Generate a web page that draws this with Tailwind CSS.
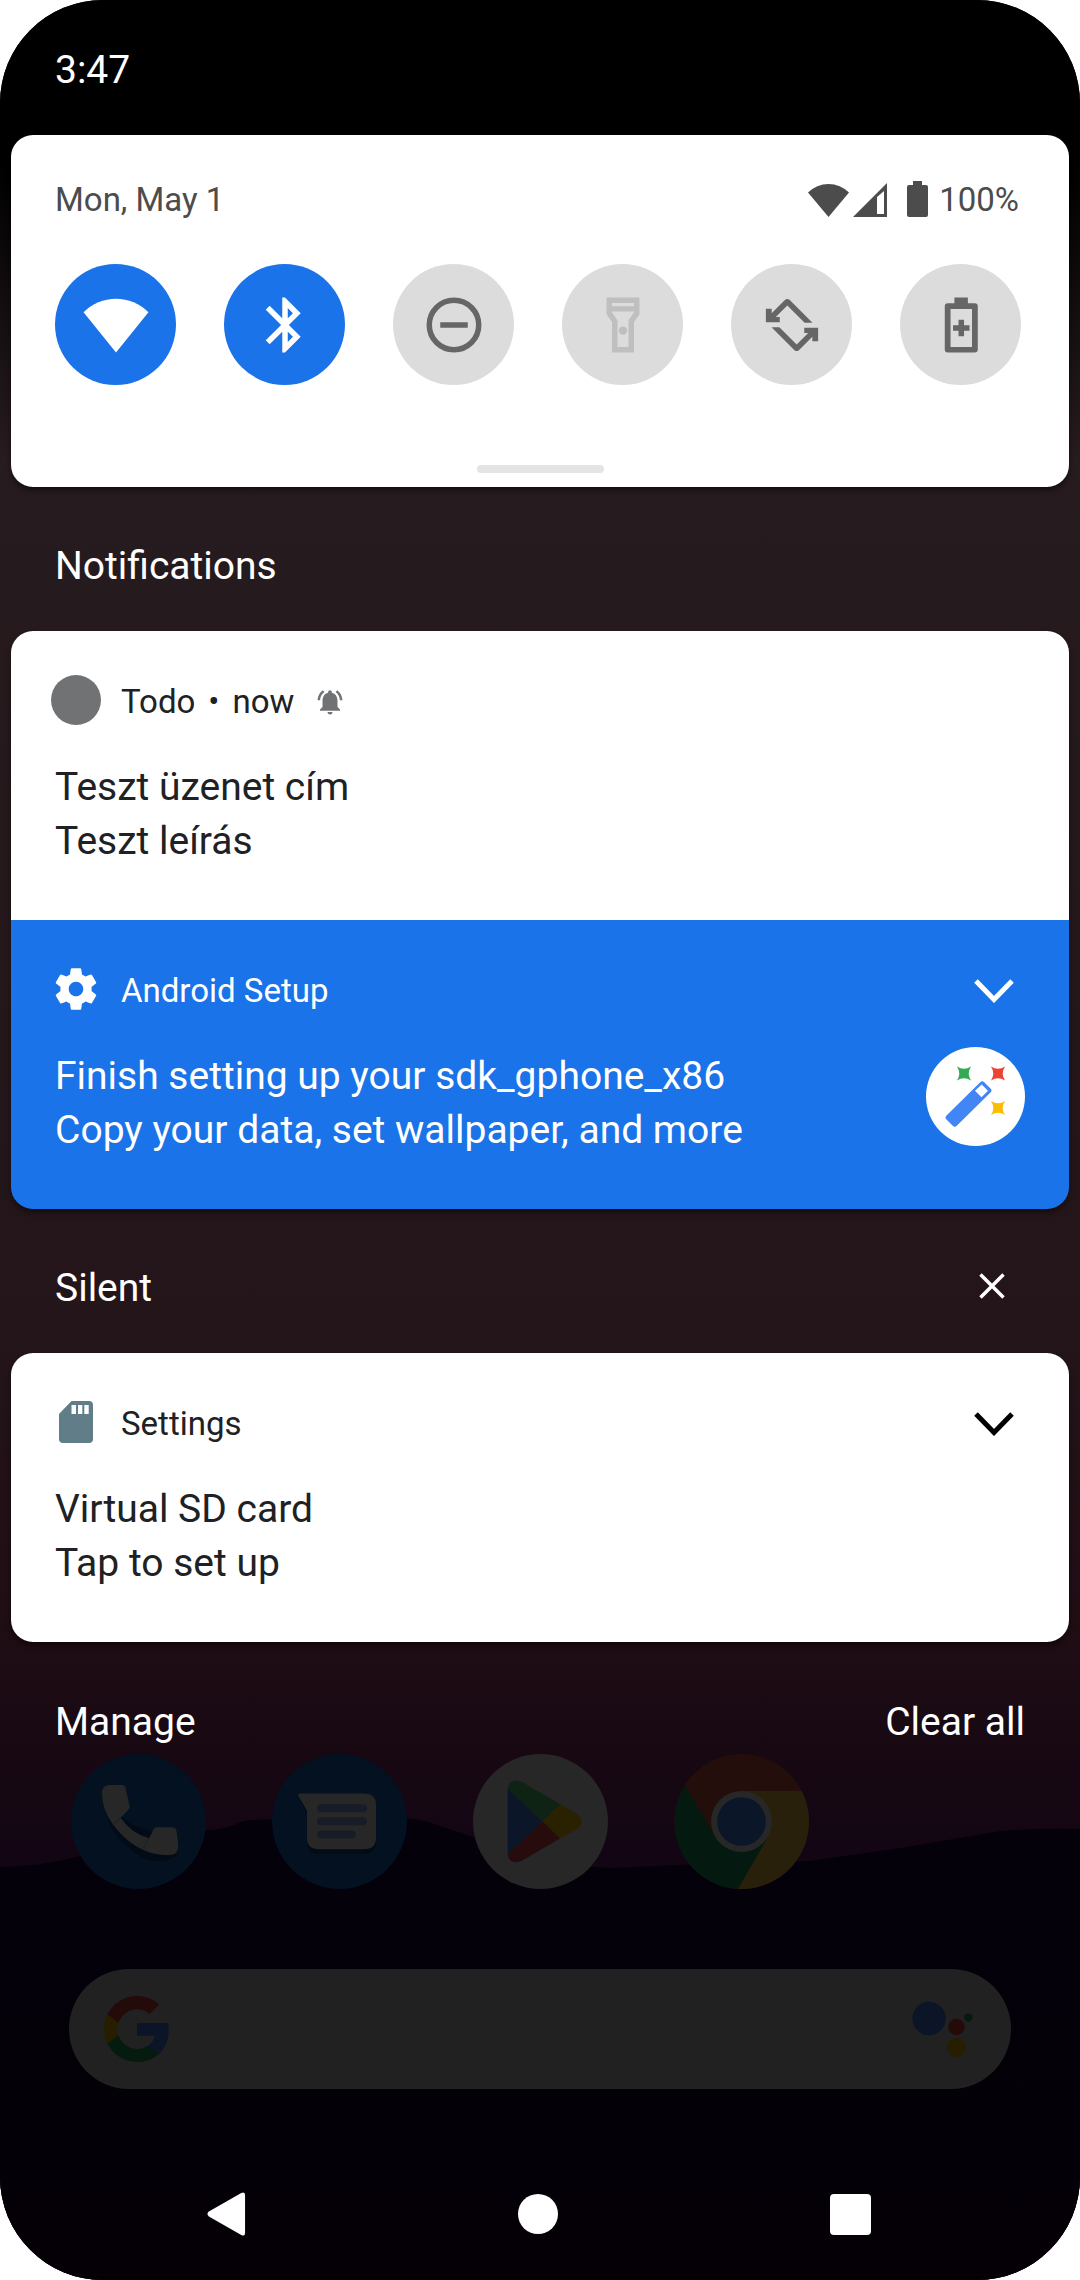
<!DOCTYPE html>
<html lang="en">
<head>
<meta charset="utf-8">
<meta name="viewport" content="width=device-width, initial-scale=1">
<title>Notification shade</title>
<script src="https://cdn.jsdelivr.net/npm/@tailwindcss/browser@4"></script>
</head>
<body class="bg-white font-['Roboto',sans-serif]">
<div class="relative isolate flex min-h-screen flex-col overflow-hidden rounded-[103px] bg-[#040007] text-[39px] leading-[54px] text-white">

  <!-- Wallpaper -->
  <svg class="absolute inset-0 -z-10 h-full w-full" viewBox="0 0 1080 2280" preserveAspectRatio="none" aria-hidden="true">
    <defs>
      <linearGradient id="sky" x1="0" y1="0" x2="0" y2="1">
        <stop offset="0" stop-color="#000"/>
        <stop offset=".07" stop-color="#000"/>
        <stop offset=".2" stop-color="#261b1e"/>
        <stop offset=".4" stop-color="#24181b"/>
        <stop offset=".58" stop-color="#23151a"/>
        <stop offset=".72" stop-color="#1f0d14"/>
        <stop offset=".77" stop-color="#170812"/>
        <stop offset=".82" stop-color="#120514"/>
      </linearGradient>
      <linearGradient id="hill" x1="0" y1="0" x2="0" y2="1">
        <stop offset="0" stop-color="#04010b"/>
        <stop offset="1" stop-color="#040006"/>
      </linearGradient>
    </defs>
    <rect width="1080" height="2280" fill="url(#sky)"/>
    <path fill="url(#hill)" d="M0 1867Q45 1866 80 1856L206 1830Q225 1830 240 1822Q260 1818 290 1820H380Q410 1814 440 1826L473 1837Q540 1866 610 1868L700 1864L809 1861L900 1848L1000 1831Q1040 1828 1080 1829V2280H0Z"/>
  </svg>

  <header class="px-[55px] pt-[43px] pb-[38px]"><time>3:47</time></header>

  <main class="px-[11px]">
    <!-- Quick settings -->
    <section class="rounded-[22px] bg-white pr-12 pl-11 text-[33px] leading-10 text-[#4c4c4c] shadow-md shadow-black/40" aria-label="Quick settings">
      <div class="flex items-center justify-between pt-[45px] pr-0.5">
        <time>Mon, May 1</time>
        <div class="flex items-center">
          <svg class="mr-1 h-[34px] w-[41px]" viewBox="0 0 41 34" fill="currentColor" aria-label="Wi-Fi"><path d="M20.500 34L0 9.500A29 29 0 0 1 41 9.500Z"/></svg>
          <svg class="mr-5 h-[34px] w-[34px]" viewBox="0 0 34 34" fill="currentColor" aria-label="Signal"><path fill-rule="evenodd" d="M34 0V34H0ZM24 14V31H31V8Z"/></svg>
          <svg class="mr-[11px] mb-0.5 h-9 w-[21px]" viewBox="0 0 21 36" fill="currentColor" aria-label="Battery"><path d="M6 0H15V4H19Q21 4 21 6V34Q21 36 19 36H2Q0 36 0 34V6Q0 4 2 4H6Z"/></svg>
          <span>100%</span>
        </div>
      </div>
      <div class="flex justify-between pt-11">
        <button class="grid size-[121px] place-items-center rounded-full bg-[#1a73e8] text-white" aria-label="Wi-Fi"><svg class="size-[66px]" viewBox="0 0 24 24" fill="currentColor"><path d="M12 22L.2 7.400A16.500 16.500 0 0 1 23.800 7.400Z"/></svg></button>
        <button class="grid size-[121px] place-items-center rounded-full bg-[#1a73e8] text-white" aria-label="Bluetooth"><svg class="size-[66px]" viewBox="0 0 24 24" fill="currentColor"><path d="M17.710 7.710L12 2h-1v7.590L6.410 5 5 6.410 10.590 12 5 17.590 6.410 19 11 14.410V22h1l5.710-5.710-4.300-4.290 4.300-4.290zM13 5.830l1.880 1.880L13 9.590V5.830zm1.880 10.460L13 18.170v-3.760l1.880 1.880z"/></svg></button>
        <button class="grid size-[121px] place-items-center rounded-full bg-[#dcdcdc] text-[#666]" aria-label="Do not disturb"><svg class="size-[66px]" viewBox="0 0 24 24" fill="none" stroke="currentColor" stroke-width="2"><circle cx="12" cy="12" r="9"/><path d="M7 12h10"/></svg></button>
        <button class="grid size-[121px] place-items-center rounded-full bg-[#dcdcdc] text-[#bfbfbf]" aria-label="Flashlight"><svg class="size-[66px]" viewBox="0 0 24 24" fill="currentColor"><path fill-rule="evenodd" d="M6 2H18V8L16 11V22H8V11L6 8ZM8 4V5.200H16V4ZM8 7.100V7.400L10 10.400V20H14V10.400L16 7.400V7.100Z"/><circle cx="12" cy="14" r="1.500"/></svg></button>
        <button class="grid size-[121px] place-items-center rounded-full bg-[#dcdcdc] text-[#666]" aria-label="Auto-rotate"><svg class="size-[66px]" viewBox="0 0 24 24" fill="currentColor"><path id="turn" d="M2.500 6.100H4.600V7.700L9.500 2.850Q10.300 2.200 11.100 2.850L19.450 11.150H16.600L10.300 4.900L6.100 9.100H7.550V11H2.500Z"/><use href="#turn" transform="rotate(180 12 12)"/></svg></button>
        <button class="grid size-[121px] place-items-center rounded-full bg-[#dcdcdc] text-[#666]" aria-label="Battery saver"><svg class="size-[66px]" viewBox="0 0 24 24" fill="currentColor"><path fill-rule="evenodd" d="M9.600 2H14.500V4.100H17Q18.100 4.100 18.100 5.200V20.900Q18.100 22 17 22H7.200Q6.100 22 6.100 20.900V5.200Q6.100 4.100 7.200 4.100H9.600ZM8.200 6.200V20H16V6.200ZM11.100 10.100H13.100V12.100H15.100V14.100H13.100V16.100H11.100V14.100H9.100V12.100H11.100Z"/></svg></button>
      </div>
      <div class="flex justify-center pt-20 pb-3.5 pl-1"><div class="h-2 w-[127px] rounded-full bg-[#e4e4e4]"></div></div>
    </section>

    <h2 class="px-11 pt-[52px] pb-[38px]">Notifications</h2>

    <div class="overflow-hidden rounded-[22px] shadow-md shadow-black/40">
      <article class="bg-white px-11 pt-11 pb-[52px] text-[#202124]">
        <div class="-ml-1 flex items-center text-[33px] leading-[46px]">
          <span class="size-[50px] rounded-full bg-[#717274]"></span>
          <div class="ml-5 flex items-center gap-[13px] pt-1"><span>Todo</span><span>•</span><time>now</time>
          <svg class="ml-2 size-[30px] text-[#717274]" viewBox="0 0 24 24" fill="currentColor" aria-label="Alerted"><path d="M7.580 4.080L6.150 2.650C3.750 4.480 2.170 7.300 2.030 10.500h2c.15-2.650 1.510-4.970 3.550-6.420zm12.390 6.420h2c-.15-3.200-1.730-6.020-4.120-7.850l-1.420 1.430c2.020 1.450 3.390 3.770 3.540 6.420zM18 11c0-3.070-1.640-5.640-4.500-6.320V4c0-.83-.67-1.500-1.500-1.500s-1.500.67-1.500 1.500v.68C7.630 5.360 6 7.920 6 11v5l-2 2v1h16v-1l-2-2v-5zm-6 11c.14 0 .27-.01.4-.04.65-.14 1.180-.58 1.440-1.180.1-.24.15-.5.15-.78h-4c.01 1.100.9 2 2.010 2z"/></svg></div>
        </div>
        <h3 class="mt-[35px]">Teszt üzenet cím</h3>
        <p>Teszt leírás</p>
      </article>

      <article class="bg-[#1a73e8] px-11 pt-11 pb-[52px]">
        <div class="-ml-1 flex items-center text-[33px] leading-[46px]">
          <svg class="size-[50px]" viewBox="0 0 24 24" fill="currentColor" aria-hidden="true"><path d="M19.430 12.980c.04-.32.07-.64.07-.98s-.03-.66-.07-.98l2.110-1.650c.19-.15.24-.42.12-.64l-2-3.460c-.12-.22-.39-.3-.61-.22l-2.490 1c-.52-.4-1.080-.73-1.690-.98l-.38-2.650C14.460 2.180 14.250 2 14 2h-4c-.25 0-.46.18-.49.42l-.38 2.650c-.61.25-1.170.59-1.690.98l-2.490-1c-.23-.09-.49 0-.61.22l-2 3.460c-.13.22-.07.49.12.64l2.110 1.650c-.04.32-.07.65-.07.98s.03.66.07.98l-2.110 1.650c-.19.15-.24.42-.12.64l2 3.460c.12.22.39.3.61.22l2.490-1c.52.4 1.080.73 1.690.98l.38 2.650c.03.24.24.42.49.42h4c.25 0 .46-.18.49-.42l.38-2.650c.61-.25 1.170-.59 1.690-.98l2.490 1c.23.09.49 0 .61-.22l2-3.460c.12-.22.07-.49-.12-.64l-2.110-1.650zM12 15.500c-1.930 0-3.500-1.570-3.500-3.500s1.570-3.500 3.500-3.500 3.500 1.570 3.500 3.500-1.570 3.500-3.500 3.500z"/></svg>
          <span class="ml-5 pt-1">Android Setup</span>
          <button class="mr-[11px] ml-auto pt-1" aria-label="Expand Android Setup"><svg class="h-6 w-10" viewBox="0 0 40 24" fill="none" stroke="currentColor" stroke-width="5"><path d="M2 2L20 20.500L38 2"/></svg></button>
        </div>
        <div class="mt-[35px] flex items-start justify-between">
          <div>
            <h3>Finish setting up your sdk_gphone_x86</h3>
            <p>Copy your data, set wallpaper, and more</p>
          </div>
          <svg class="-mt-0.5 size-[99px] shrink-0" viewBox="0 0 99 99" aria-hidden="true">
            <circle cx="49.500" cy="49.500" r="49.500" fill="#fff"/>
            <path fill="#4285f4" fill-rule="evenodd" d="M54 35.500Q56 33 58.500 35.500L64.500 41.500Q66.500 43.500 64.500 45.500L31 78.500Q29 81 26.500 78.500L20.500 72.500Q18.500 70.500 20.500 68.500ZM55.700 37.500L49 43.700L55.500 50.300L62 43.700Z"/>
            <path fill="#34a853" d="M31 19.500Q38 24 45 19.500Q40.500 26.500 45 33.500Q38 29 31 33.500Q35.500 26.500 31 19.500Z"/>
            <path fill="#ea4335" d="M65 19.500Q72 24 79 19.500Q74.500 26.500 79 33.500Q72 29 65 33.500Q69.500 26.500 65 19.500Z"/>
            <path fill="#fbbc04" d="M65 54Q72 58.500 79 54Q74.500 61 79 68Q72 63.500 65 68Q69.500 61 65 54Z"/>
          </svg>
        </div>
      </article>
    </div>

    <div class="flex items-center justify-between px-11 pt-[52px] pb-[38px]">
      <h2>Silent</h2>
      <button class="mr-5 pb-1" aria-label="Clear silent notifications"><svg class="size-[26px]" viewBox="0 0 26 26" fill="none" stroke="currentColor" stroke-width="3.500"><path d="M1.500 1.500L24.500 24.500M24.500 1.500L1.500 24.500"/></svg></button>
    </div>

    <article class="rounded-[22px] bg-white px-11 pt-11 pb-[52px] text-[#202124] shadow-md shadow-black/40">
      <div class="-ml-1 flex items-center text-[33px] leading-[46px]">
        <svg class="mx-2 h-[42px] w-[34px]" viewBox="0 0 34 42" aria-hidden="true"><path fill="#607d88" fill-rule="evenodd" d="M12.500 0H30Q34 0 34 4V38Q34 42 30 42H4Q0 42 0 38V13ZM12.500 4V13H17V4ZM19 4V13H23.300V4ZM25.300 4V13H29.700V4Z"/></svg>
        <span class="ml-5 pt-1">Settings</span>
        <button class="mr-[11px] ml-auto pt-1 text-black" aria-label="Expand Settings"><svg class="h-6 w-10" viewBox="0 0 40 24" fill="none" stroke="currentColor" stroke-width="5"><path d="M2 2L20 20.500L38 2"/></svg></button>
      </div>
      <h3 class="mt-[35px]">Virtual SD card</h3>
      <p>Tap to set up</p>
    </article>

    <div class="flex justify-between px-11 pt-[53px] pb-[5px]">
      <button>Manage</button>
      <button>Clear all</button>
    </div>
  </main>

  <!-- Dimmed home screen dock -->
  <nav class="flex gap-[66px] px-[71px]" aria-label="Dock">
    <a href="#phone" aria-label="Phone"><svg class="size-[135px]" viewBox="0 0 135 135"><circle cx="67.500" cy="67.500" r="67.500" fill="#031121"/><path fill="#020b16" d="M33 48Q38 90 78 106Q110 112 108 88L60 70Z"/><path fill="#272727" d="M39 31H51Q54 31 54.600 34L58.600 52Q59 54 57.500 55.500L49.700 63.700Q60 79 78 84.300L82.500 75.500Q83.700 73.300 86 73.300H101Q105 73.300 105.500 77L107.500 91Q108 101 98 101Q72 102 51 81Q31 61 31 39Q31 31 39 31Z"/><path stroke="#1f2223" stroke-width="1.500" d="M49.700 63.700L42 71M78 84.300L72 95"/></svg></a>
    <a href="#messages" aria-label="Messages"><svg class="size-[135px]" viewBox="0 0 135 135"><circle cx="67.500" cy="67.500" r="67.500" fill="#031121"/><path fill="#020b16" d="M28 46L35 60V90Q36 100 47 100H92Q104 100 104 88V60Z"/><path fill="#272727" d="M28 39.500H92Q104 39.500 104 51V84Q104 95.300 92 95.300H47Q35 95.300 35 84V57L26.500 42Q25.500 39.500 28 39.500Z"/><path stroke="#171c26" stroke-width="8" stroke-linecap="round" d="M49 54.200H91M49 67.300H91M49 80.400H80"/></svg></a>
    <a href="#play" aria-label="Play Store"><svg class="size-[135px]" viewBox="0 0 135 135"><circle cx="67.500" cy="67.500" r="67.500" fill="#272727"/><path fill="#0c1629" d="M34.700 34L69.300 67.300L34.700 101Z"/><path fill="#0e2314" d="M69.300 67.300L34.700 35Q36 26 44 26.500Q47 26.500 50 28.500L87 50.300Z"/><path fill="#2a2100" d="M69.300 67.300L87 50.300L103 59.500Q108.500 63 108.500 67.500Q108.500 72 103 75.500L87 84.500Z"/><path fill="#260c0c" d="M69.300 67.300L87 84.500L50 106Q47 108.300 43 108.300Q36 108 34.700 101Z"/></svg></a>
    <a href="#chrome" aria-label="Chrome"><svg class="size-[135px]" viewBox="0 0 135 135"><circle cx="67.500" cy="67.500" r="67.500" fill="#240e0c"/><path fill="#29200c" d="M67 37H127.700A67.500 67.500 0 0 1 63.700 135L91 87Z"/><path fill="#04190f" d="M11 31.300A67.500 67.500 0 0 0 63.700 135L94 83L67 98L41 83Z"/><circle cx="67.500" cy="67.500" r="30.500" fill="#272727"/><circle cx="67.500" cy="67.500" r="24.300" fill="#0c1629"/></svg></a>
  </nav>

  <form class="mx-[69px] mt-20 flex h-[120px] items-center rounded-full bg-[#212121] pr-[38px] pl-[35px]" role="search">
    <svg class="size-[66px] shrink-0" viewBox="0 0 18 18" aria-hidden="true">
      <path fill="#0b1527" d="M17.640 9.200c0-.637-.057-1.251-.164-1.840H9v3.481h4.844a4.140 4.140 0 0 1-1.796 2.716v2.259h2.908c1.702-1.567 2.684-3.875 2.684-6.615z"/>
      <path fill="#051b0f" d="M9 18c2.430 0 4.467-.806 5.956-2.180l-2.908-2.259c-.806.54-1.837.86-3.048.86-2.344 0-4.328-1.584-5.036-3.711H.957v2.332A8.997 8.997 0 0 0 9 18z"/>
      <path fill="#271e00" d="M3.964 10.710A5.410 5.410 0 0 1 3.682 9c0-.593.102-1.170.282-1.710V4.958H.957A8.996 8.996 0 0 0 0 9c0 1.452.348 2.827.957 4.042l3.007-2.332z"/>
      <path fill="#250a0a" d="M9 3.580c1.321 0 2.508.454 3.440 1.345l2.582-2.580C13.463.891 11.426 0 9 0A8.997 8.997 0 0 0 .957 4.958L3.964 7.290C4.672 5.163 6.656 3.580 9 3.580z"/>
    </svg>
    <input class="min-w-0 flex-1 bg-transparent px-5 outline-none" type="search" aria-label="Search">
    <button class="shrink-0" type="button" aria-label="Assistant"><svg class="h-14 w-[61px]" viewBox="0 0 61 56"><circle cx="17" cy="17.500" r="16.700" fill="#0b1527"/><circle cx="44.500" cy="26" r="8.300" fill="#250a0a"/><circle cx="56.500" cy="16.500" r="4.200" fill="#051b0f"/><circle cx="44.500" cy="46.500" r="9.500" fill="#271e00"/></svg></button>
  </form>

  <nav class="mt-auto flex items-center justify-between pr-[209px] pb-[43px] pl-[206px]" aria-label="System navigation">
    <button aria-label="Back"><svg class="h-[46px] w-10" viewBox="0 0 42 46" fill="currentColor"><path d="M3 20.500L37 1Q41 -1 41 3V43Q41 47 37 45L3 25.500Q0 23 3 20.500Z"/></svg></button>
    <button class="size-10 rounded-full bg-white" aria-label="Home"></button>
    <button class="size-[41px] rounded-[4px] bg-white" aria-label="Recent apps"></button>
  </nav>
</div>
</body>
</html>
